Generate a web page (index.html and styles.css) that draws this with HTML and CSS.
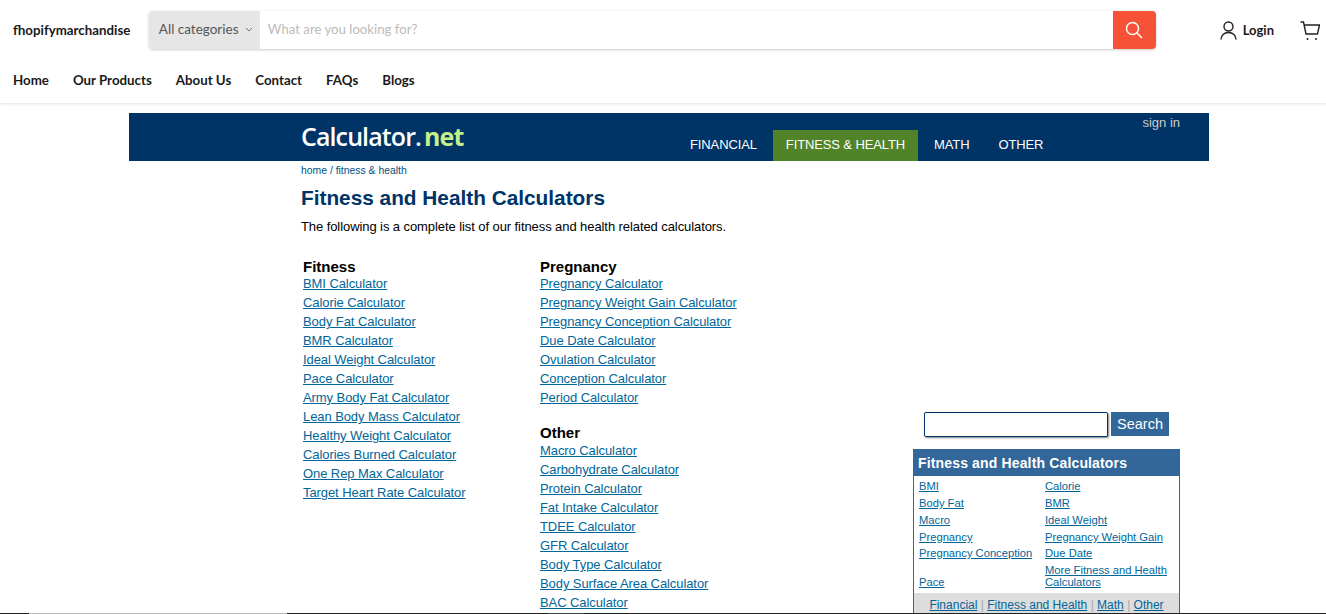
FILE: index.html
```html
<!DOCTYPE html>
<html lang="en">
<head>
    <meta charset="UTF-8">
    <title>Fitness and Health Calculators</title>
    <link rel="stylesheet" href="styles.css">
</head>
<body>
    <!-- Store Header -->
    <header class="store-header">
        <div class="store-top">
            <a class="store-name" href="#">fhopifymarchandise</a>
            <form class="store-search">
                <div class="category-select">All categories
                    <svg width="8" height="5" viewBox="0 0 8 5"><path d="M1 1l3 3 3-3" fill="none" stroke="#777" stroke-width="1"/></svg>
                </div>
                <div class="store-input">What are you looking for?</div>
                <button class="store-search-btn" type="button">
                    <svg width="18" height="18" viewBox="0 0 18 18"><circle cx="7.5" cy="7.5" r="6" fill="none" stroke="#fff" stroke-width="1.5"/><path d="M12 12l5 5" stroke="#fff" stroke-width="1.5"/></svg>
                </button>
            </form>
            <a class="login" href="#">
                <svg width="17" height="19" viewBox="0 0 17 19"><circle cx="8.5" cy="5.5" r="4.5" fill="none" stroke="#222" stroke-width="1.4"/><path d="M1 18.500c0-4 3-7 7.500-7s7.500 3 7.500 7" fill="none" stroke="#222" stroke-width="1.4"/></svg>
                Login
            </a>
            <a class="cart" href="#">
                <svg width="20" height="20" viewBox="0 0 20 20"><path d="M0.500 1h3l2.500 12h11.500l2-9H4.500" fill="none" stroke="#222" stroke-width="1.400"/><circle cx="7.500" cy="18" r="1" fill="#222"/><circle cx="16" cy="18" r="1" fill="#222"/></svg>
            </a>
        </div>
        <nav class="store-nav">
            <a href="#">Home</a>
            <a href="#">Our Products</a>
            <a href="#">About Us</a>
            <a href="#">Contact</a>
            <a href="#">FAQs</a>
            <a href="#">Blogs</a>
        </nav>
    </header>

    <!-- Calculator Site -->
    <div class="calc-banner">
        <a class="calc-logo" href="#">Calculator<span class="dot">.</span><span class="net">net</span></a>
        <div class="calc-tabs">
            <a href="#">FINANCIAL</a>
            <a class="active" href="#">FITNESS &amp; HEALTH</a>
            <a href="#">MATH</a>
            <a href="#">OTHER</a>
        </div>
        <a class="sign-in" href="#">sign in</a>
    </div>

    <div class="calc-body">
        <main class="calc-main">
            <div class="breadcrumb"><a href="#">home</a> / <a href="#">fitness &amp; health</a></div>
            <h1>Fitness and Health Calculators</h1>
            <p class="intro">The following is a complete list of our fitness and health related calculators.</p>
            <div class="lists">
                <div class="list-col">
                    <div class="list-title">Fitness</div>
                    <a href="#">BMI Calculator</a>
                    <a href="#">Calorie Calculator</a>
                    <a href="#">Body Fat Calculator</a>
                    <a href="#">BMR Calculator</a>
                    <a href="#">Ideal Weight Calculator</a>
                    <a href="#">Pace Calculator</a>
                    <a href="#">Army Body Fat Calculator</a>
                    <a href="#">Lean Body Mass Calculator</a>
                    <a href="#">Healthy Weight Calculator</a>
                    <a href="#">Calories Burned Calculator</a>
                    <a href="#">One Rep Max Calculator</a>
                    <a href="#">Target Heart Rate Calculator</a>
                </div>
                <div class="list-col">
                    <div class="list-title">Pregnancy</div>
                    <a href="#">Pregnancy Calculator</a>
                    <a href="#">Pregnancy Weight Gain Calculator</a>
                    <a href="#">Pregnancy Conception Calculator</a>
                    <a href="#">Due Date Calculator</a>
                    <a href="#">Ovulation Calculator</a>
                    <a href="#">Conception Calculator</a>
                    <a href="#">Period Calculator</a>
                    <div class="list-title second">Other</div>
                    <a href="#">Macro Calculator</a>
                    <a href="#">Carbohydrate Calculator</a>
                    <a href="#">Protein Calculator</a>
                    <a href="#">Fat Intake Calculator</a>
                    <a href="#">TDEE Calculator</a>
                    <a href="#">GFR Calculator</a>
                    <a href="#">Body Type Calculator</a>
                    <a href="#">Body Surface Area Calculator</a>
                    <a href="#">BAC Calculator</a>
                </div>
            </div>
        </main>

        <aside class="calc-side">
            <form class="side-search">
                <input type="text">
                <button type="button">Search</button>
            </form>
            <div class="side-box">
                <div class="side-title">Fitness and Health Calculators</div>
                <div class="side-links">
                    <a href="#">BMI</a><a href="#">Calorie</a>
                    <a href="#">Body Fat</a><a href="#">BMR</a>
                    <a href="#">Macro</a><a href="#">Ideal Weight</a>
                    <a href="#">Pregnancy</a><a href="#">Pregnancy Weight Gain</a>
                    <a class="tight" href="#">Pregnancy Conception</a><a class="tight" href="#">Due Date</a>
                    <a class="bottom" href="#">Pace</a><a href="#">More Fitness and Health Calculators</a>
                </div>
                <div class="side-foot">
                    <a href="#">Financial</a> <i>|</i> <a href="#">Fitness and Health</a> <i>|</i> <a href="#">Math</a> <i>|</i> <a href="#">Other</a>
                </div>
            </div>
        </aside>
    </div>
    <div class="bottom-line"></div>
</body>
</html>
```

FILE: styles.css
```css
/* General Reset */
* {
    margin: 0;
    padding: 0;
    box-sizing: border-box;
}

html, body {
    height: 614px;
    overflow: hidden;
}

body {
    background-color: #fff;
    font-family: 'Liberation Sans', Arial, sans-serif;
    position: relative;
}

/* Store Header */
.store-header {
    height: 103px;
    background-color: #fff;
    box-shadow: 0 1px 3px rgba(0, 0, 0, 0.12);
    font-family: 'Lato', sans-serif;
    color: #1a1a1a;
}

.store-header a {
    color: #1a1a1a;
    text-decoration: none;
}

.store-top {
    display: flex;
    align-items: center;
    height: 60px;
    padding: 0 6px 0 13px;
}

.store-name {
    width: 136px;
    font-size: 13.3px;
    font-weight: 700;
}

.store-search {
    display: flex;
    width: 1008px;
    height: 38px;
    border-radius: 4px;
    box-shadow: 0 1px 3px rgba(0, 0, 0, 0.2);
}

.category-select {
    display: flex;
    align-items: center;
    gap: 7px;
    width: 111px;
    padding: 0 0 2px 10px;
    background-color: #e6e6e6;
    border-radius: 4px 0 0 4px;
    font-size: 13.5px;
    color: #555;
}

.store-input {
    flex: 1;
    display: flex;
    align-items: center;
    padding: 0 0 2px 8px;
    font-size: 13.2px;
    color: #bbb;
}

.store-search-btn {
    display: flex;
    align-items: center;
    justify-content: center;
    width: 43px;
    background-color: #f55238;
    border: none;
    border-radius: 0 4px 4px 0;
}

.login {
    display: flex;
    align-items: center;
    gap: 6px;
    margin-left: 64px;
    font-size: 13px;
    font-weight: 700;
}

.cart {
    display: flex;
    margin: 1px 0 0 26px;
}

.store-nav {
    display: flex;
    gap: 24px;
    padding: 0 13px;
    margin-top: 12px;
    font-size: 13.3px;
    font-weight: 700;
}

/* Calculator Banner */
.calc-banner {
    position: relative;
    display: flex;
    align-items: flex-end;
    width: 1080px;
    height: 48px;
    margin: 10px 0 0 129px;
    padding-left: 172px;
    background-color: #003366;
}

.calc-logo {
    align-self: center;
    width: 376px;
    margin-top: -3px;
    font-family: 'Open Sans', sans-serif;
    font-size: 25px;
    font-weight: 600;
    letter-spacing: -0.9px;
    color: #fff;
    text-decoration: none;
}

.calc-logo .dot {
    color: #fff;
    margin-right: 3px;
}

.calc-logo .net {
    color: #c5f08b;
    font-weight: 700;
}

.calc-tabs {
    display: flex;
}

.calc-tabs a {
    height: 31px;
    padding: 7px 13px 0;
    margin-right: 3px;
    font-size: 13px;
    letter-spacing: -0.12px;
    color: #fff;
    text-decoration: none;
}

.calc-tabs a.active {
    background-color: #518428;
}

.sign-in {
    position: absolute;
    top: 2px;
    right: 29px;
    font-size: 13px;
    color: #ccc;
    text-decoration: none;
}

/* Calculator Body */
.calc-body {
    display: flex;
    width: 1080px;
    margin-left: 129px;
}

.calc-main {
    width: 784px;
    padding-left: 172px;
}

.breadcrumb {
    margin-top: 4px;
    font-size: 10.4px;
    color: #00507f;
}

.breadcrumb a {
    color: #00507f;
    text-decoration: none;
}

h1 {
    margin-top: 9px;
    font-size: 20.8px;
    line-height: 26px;
    color: #003366;
}

.intro {
    margin-top: 8px;
    font-size: 13px;
    letter-spacing: -0.08px;
    line-height: 16px;
    color: #000;
}

.lists {
    display: flex;
    margin-top: 23px;
    padding-left: 2px;
}

.list-col {
    display: flex;
    flex-direction: column;
    align-items: flex-start;
    width: 237px;
}

.list-title {
    font-size: 15px;
    line-height: 18px;
    font-weight: 700;
    color: #000;
}

.list-title.second {
    margin: 15px 0 1px;
}

.list-col a {
    height: 19px;
    font-size: 13px;
    letter-spacing: -0.08px;
    line-height: 16px;
    color: #006699;
}

/* Sidebar */
.calc-side {
    width: 267px;
    padding-top: 251px;
}

.side-search {
    display: flex;
    gap: 3px;
    padding-left: 11px;
}

.side-search input {
    width: 184px;
    height: 25px;
    border: 1px solid #003366;
    border-radius: 2px;
    box-shadow: 1px 1px 2px rgba(0, 0, 0, 0.5);
}

.side-search button {
    width: 58px;
    height: 24px;
    background-color: #336699;
    border: none;
    font-family: inherit;
    font-size: 14.500px;
    color: #fff;
}

.side-box {
    width: 267px;
    margin-top: 12px;
    border: 1px solid #336699;
    border-top: none;
}

.side-title {
    height: 27px;
    padding: 6px 5px 0;
    margin: 0 -1px;
    background-color: #336699;
    font-size: 14px;
    font-weight: 700;
    color: #fff;
    letter-spacing: 0.15px;
}

.side-links {
    display: grid;
    grid-template-columns: 126px 1fr;
    padding: 4px 0 5px 5px;
    font-size: 11.2px;
    line-height: 12px;
    row-gap: 5px;
}

.side-links a {
    color: #006699;
}

.side-links a.tight {
    margin-top: -1px;
}

.side-links a.bottom {
    align-self: end;
}

.side-foot {
    height: 30px;
    padding-top: 4px;
    background-color: #ddd;
    text-align: center;
    font-size: 12px;
    line-height: 16px;
}

.side-foot a {
    color: #006699;
}

.side-foot i {
    font-style: normal;
    color: #aaa;
}

/* Bottom strip along the window edge */
.bottom-line {
    position: absolute;
    left: 0;
    right: 0;
    bottom: 0;
    height: 1px;
    background: linear-gradient(to right, #222 0, #222 29px, #bbb 29px, #bbb 287px, #222 287px, #222 548px, #444 548px, #444 584px, #222 584px);
}
```
